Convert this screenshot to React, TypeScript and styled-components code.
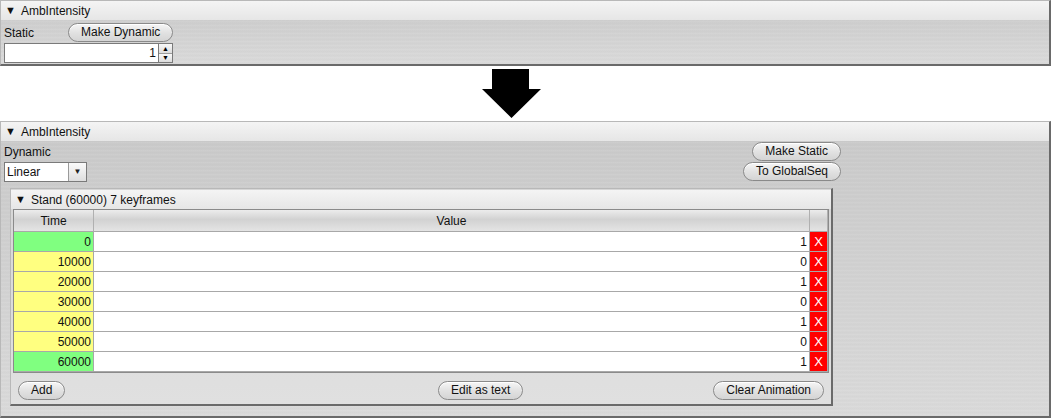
import React from 'react'
import styled, { createGlobalStyle } from 'styled-components'

const GlobalStyle = createGlobalStyle`
  body {
    margin: 0;
    background: #fff;
    font-family: "Liberation Sans", Arial, sans-serif;
    font-size: 12px;
    color: #111;
  }
`

const metal = `
  background-color: #d0d0d0;
  background-image:
    repeating-linear-gradient(180deg, rgba(255,255,255,0.05) 0px, rgba(255,255,255,0.05) 1px, rgba(0,0,0,0.015) 2px, rgba(0,0,0,0) 4px),
    linear-gradient(180deg, #c9c9c9 0%, #d3d3d3 60%, #dadada 100%);
`

const Page = styled.div`
  display: flex;
  flex-direction: column;
  width: 1053px;
`

const Panel = styled.div`
  width: 1048px;
  border: 1px solid #b8b8b8;
  border-right: 2px solid #6a6a6a;
  border-bottom: 2px solid #6a6a6a;
  ${metal}
`

const TitleBar = styled.div<{ $inner?: boolean }>`
  height: 19px;
  margin-top: ${(p) => (p.$inner ? '1px' : '0')};
  display: flex;
  align-items: center;
  gap: 5px;
  padding-left: 4px;
  background: linear-gradient(180deg, #f4f4f4, #e6e6e6);
  line-height: 1;
`

const Tri = styled.span`
  font-size: 11px;
`

const Body = styled.div<{ $bottom?: number }>`
  padding: 1px 3px ${(p) => p.$bottom ?? 1}px;
`

const StaticRow = styled.div`
  display: flex;
  align-items: center;
  gap: 34px;
  height: 21px;
  margin-top: 1px;
`

const PillButton = styled.button`
  font-family: "Liberation Sans", Arial, sans-serif;
  font-size: 12px;
  color: #111;
  height: 19px;
  padding: 0 12px;
  border: 1px solid #8a8a8a;
  border-radius: 10px;
  background: linear-gradient(180deg, #f6f6f6 0%, #e2e2e2 50%, #d4d4d4 100%);
  box-shadow: inset 0 1px 0 #fff;
  cursor: default;
  line-height: 17px;
`

const Spinner = styled.div`
  display: flex;
  width: 169px;
  height: 20px;
`

const SpinField = styled.div`
  flex: 1;
  background: #fff;
  border: 1px solid #7a7a7a;
  display: flex;
  align-items: center;
  justify-content: flex-end;
  padding-right: 2px;
`

const SpinArrows = styled.div`
  width: 13px;
  display: flex;
  flex-direction: column;
  border: 1px solid #7a7a7a;
  border-left: none;
`

const SpinBtn = styled.div`
  flex: 1;
  display: flex;
  align-items: center;
  justify-content: center;
  background: linear-gradient(180deg, #f8f8f8, #dcdcdc);
  & + & {
    border-top: 1px solid #9a9a9a;
  }
  font-size: 7px;
  color: #000;
`

const ArrowWrap = styled.div`
  box-sizing: border-box;
  height: 55px;
  display: flex;
  justify-content: center;
  align-items: flex-start;
  padding-right: 31px;
  padding-top: 3px;
`

const DynHead = styled.div`
  width: 837px;
  display: flex;
  justify-content: space-between;
`

const LeftCol = styled.div`
  display: flex;
  flex-direction: column;
  padding-top: 3px;
  gap: 3px;
  line-height: 14px;
`

const RightCol = styled.div`
  display: flex;
  flex-direction: column;
  align-items: flex-end;
  gap: 1px;
`

const Combo = styled.div`
  display: flex;
  width: 81px;
  height: 18px;
  border: 1px solid #7a7a7a;
  background: #fff;
`

const ComboText = styled.div`
  flex: 1;
  padding-left: 2px;
  display: flex;
  align-items: center;
`

const ComboBtn = styled.div`
  width: 17px;
  border-left: 1px solid #9a9a9a;
  background: linear-gradient(180deg, #fafafa, #dedede);
  display: flex;
  align-items: center;
  justify-content: center;
  font-size: 8px;
  color: #222;
`

const InnerPanel = styled.div`
  width: 820px;
  margin: 6px 0 0 6px;
  border: 1px solid #b8b8b8;
  border-right: 2px solid #6a6a6a;
  border-bottom: 2px solid #6a6a6a;
  background: linear-gradient(180deg, #d6d6d6, #e0e0e0);
`

const Table = styled.div`
  margin: 0 2px 0 2px;
  border: 1px solid #8a8a8a;
  background: #d8d8d8;
  display: grid;
  grid-template-columns: 80px 1fr 18px;
`

const HeadCell = styled.div`
  height: 21px;
  display: flex;
  align-items: center;
  justify-content: center;
  background: linear-gradient(180deg, #ececec 0%, #d2d2d2 45%, #e4e4e4 100%);
  border-right: 1px solid #b0b0b0;
  border-bottom: 1px solid #a8a8a8;
`

const Cell = styled.div<{ $bg?: string; $del?: boolean }>`
  height: 19px;
  display: flex;
  align-items: center;
  justify-content: ${(p) => (p.$del ? 'center' : 'flex-end')};
  padding-right: ${(p) => (p.$del ? '0' : '2px')};
  background: ${(p) => p.$bg || '#fff'};
  color: ${(p) => (p.$del ? '#fff' : '#111')};
  font-size: ${(p) => (p.$del ? '13px' : '12px')};
  border-bottom: 1px solid #a8a8a8;
  border-right: 1px solid #a8a8a8;
`

const Footer = styled.div`
  display: grid;
  grid-template-columns: 420px auto 1fr;
  align-items: start;
  padding: 8px 7px 4px 7px;
  & > :first-child {
    justify-self: start;
  }
  & > :last-child {
    justify-self: end;
  }
`

const keyframes = [
  { t: 0, v: 1, end: true },
  { t: 10000, v: 0 },
  { t: 20000, v: 1 },
  { t: 30000, v: 0 },
  { t: 40000, v: 1 },
  { t: 50000, v: 0 },
  { t: 60000, v: 1, end: true },
]

function DownArrow() {
  return (
    <svg width="61" height="49" viewBox="0 0 61 49">
      <polygon points="11,0 48,0 48,20 60,20 30.5,49 1,20 11,20" fill="#000" />
    </svg>
  )
}

export default function App() {
  return (
    <Page>
      <GlobalStyle />
      <Panel>
        <TitleBar>
          <Tri>▼</Tri>AmbIntensity
        </TitleBar>
        <Body>
          <StaticRow>
            <span>Static</span>
            <PillButton>Make Dynamic</PillButton>
          </StaticRow>
          <Spinner>
            <SpinField>1</SpinField>
            <SpinArrows>
              <SpinBtn>▲</SpinBtn>
              <SpinBtn>▼</SpinBtn>
            </SpinArrows>
          </Spinner>
        </Body>
      </Panel>
      <ArrowWrap>
        <DownArrow />
      </ArrowWrap>
      <Panel>
        <TitleBar>
          <Tri>▼</Tri>AmbIntensity
        </TitleBar>
        <Body $bottom={10}>
          <DynHead>
            <LeftCol>
              <span>Dynamic</span>
              <Combo>
                <ComboText>Linear</ComboText>
                <ComboBtn>▼</ComboBtn>
              </Combo>
            </LeftCol>
            <RightCol>
              <PillButton>Make Static</PillButton>
              <PillButton>To GlobalSeq</PillButton>
            </RightCol>
          </DynHead>
          <InnerPanel>
            <TitleBar $inner>
              <Tri>▼</Tri>Stand (60000) 7 keyframes
            </TitleBar>
            <Table>
              <HeadCell>Time</HeadCell>
              <HeadCell>Value</HeadCell>
              <HeadCell />
              {keyframes.map((k) => (
                <React.Fragment key={k.t}>
                  <Cell $bg={k.end ? '#80ff80' : '#ffff80'}>{k.t}</Cell>
                  <Cell>{k.v}</Cell>
                  <Cell $bg="#ff0000" $del>
                    X
                  </Cell>
                </React.Fragment>
              ))}
            </Table>
            <Footer>
              <PillButton>Add</PillButton>
              <PillButton>Edit as text</PillButton>
              <PillButton>Clear Animation</PillButton>
            </Footer>
          </InnerPanel>
        </Body>
      </Panel>
    </Page>
  )
}
